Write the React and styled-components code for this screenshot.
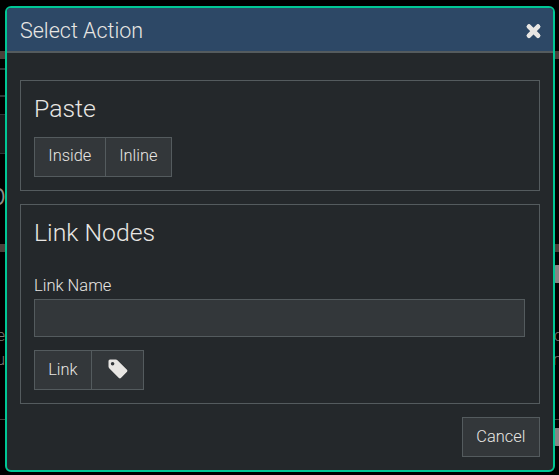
import React from "react";
import styled, { createGlobalStyle } from "styled-components";

const GlobalStyle = createGlobalStyle`
  * { box-sizing: border-box; }
  body {
    margin: 0;
    background: #000;
    color: #e8e6e3;
    font-family: Roboto, "Liberation Sans", sans-serif;
    font-weight: 300;
    font-size: 16px;
    overflow: hidden;
  }
`;

const Screen = styled.div`
  position: relative;
  width: 559px;
  height: 475px;
  overflow: hidden;
`;

const Page = styled.div`
  display: flex;
  flex-direction: column;
  height: 475px;
  padding-top: 51px;
`;

const Band = styled.div`
  height: 8px;
  background: #4a403a;
`;

const Gap = styled.div`
  height: ${(p) => p.$h}px;
`;

const Rule = styled.div`
  height: ${(p) => p.$h || 2}px;
  width: ${(p) => (p.$full ? "100%" : "50%")};
  background: ${(p) => p.$color || "#303436"};
`;

const Panel = styled.div`
  width: 50%;
  height: 40px;
  border: solid #303436;
  border-width: 1px 0;
  background: #171819;
`;

const Line = styled.div`
  display: flex;
  justify-content: space-between;
  height: 24px;
  line-height: 24px;
  font-size: ${(p) => p.$size || 16}px;
  color: ${(p) => p.$color || "#7c7770"};
`;

const Clip = styled.span`
  display: flex;
  justify-content: ${(p) => (p.$end ? "flex-end" : "flex-start")};
  width: ${(p) => p.$w}px;
`;

const Thumb = styled.div`
  align-self: flex-end;
  width: 8px;
  height: 18px;
  margin-right: -2px;
  border-radius: 3px;
  background: #858585;
`;

const Dialog = styled.section`
  position: absolute;
  left: 5px;
  top: 6px;
  width: 550px;
  height: 466px;
  border: 2px solid #00c795;
  border-radius: 6px;
  background: #24282b;
  overflow: hidden;
`;

const Header = styled.header`
  display: flex;
  align-items: center;
  justify-content: space-between;
  height: 45px;
  padding: 0 12px 0 13px;
  border-bottom: 2px solid #545b5e;
  background: #2d4866;
`;

const Title = styled.h1`
  margin: 2px 0 0;
  font-size: 21.5px;
  font-weight: 300;
  line-height: 26px;
`;

const CloseButton = styled.button`
  display: flex;
  margin: 3px -1px 0 0;
  padding: 0;
  border: 0;
  background: none;
  color: inherit;
`;

const Body = styled.div`
  display: flex;
  flex-direction: column;
  gap: 13px;
  padding: 27px 13px 13px;
`;

const Section = styled.section`
  height: ${(p) => p.$h}px;
  padding: 13px;
  border: 1px solid #545b5e;
`;

const Heading = styled.h2`
  margin: 0 0 ${(p) => p.$gap}px;
  font-size: 24.8px;
  font-weight: 300;
  line-height: 30px;
`;

const Label = styled.label`
  display: block;
  height: 26px;
  font-size: 16.5px;
  line-height: 26px;
`;

const Input = styled.input`
  display: block;
  width: 491px;
  height: 38px;
  margin-bottom: 13px;
  border: 1px solid #545b5e;
  background: #33373a;
  color: inherit;
  font: inherit;
  outline: none;
`;

const Group = styled.div`
  display: flex;
`;

const Button = styled.button`
  display: flex;
  align-items: center;
  justify-content: center;
  width: ${(p) => p.$w}px;
  height: 40px;
  padding: 0 ${(p) => (p.$icon ? 0 : 0.3)}px ${(p) => (p.$raised ? 3 : 1.6)}px 0;
  border: 1px solid #545b5e;
  background: #33373a;
  color: inherit;
  font: inherit;
  font-size: 16.4px;
  & + & { border-left: 0; }
`;

const Footer = styled.footer`
  display: flex;
  justify-content: flex-end;
`;

const CloseIcon = () => (
  <svg width="17" height="17" viewBox="0 0 17 17">
    <path d="M4 3.6L13 12.6M13 3.6L4 12.6" stroke="currentColor" strokeWidth="4.8" strokeLinecap="round" />
    <path d="M4 3.6L13 12.6M13 3.6L4 12.6" stroke="currentColor" strokeWidth="3.4" strokeLinecap="square" />
  </svg>
);

const TagIcon = () => (
  <svg width="20" height="20" viewBox="0 0 20 20">
    <path
      fill="currentColor"
      fillRule="evenodd"
      d="M.5 2Q.5.5 2 .5H7.6Q8.8.5 9.7 1.4L19 10.7Q19.9 11.7 19 12.7L12.9 19Q11.9 19.9 10.9 19L1.4 9.6Q.5 8.7.5 7.5ZM4.6 2.9a1.8 1.8 0 1 0 0 3.6a1.8 1.8 0 1 0 0-3.6Z"
    />
  </svg>
);

export default function App() {
  return (
    <>
      <GlobalStyle />
      <Screen>
        <Page aria-hidden="true">
          <Band />
          <Gap $h={9} />
          <Rule />
          <Gap $h={25} />
          <Rule />
          <Gap $h={17} />
          <Panel />
          <Gap $h={29} />
          <Line $size={31} $color="#918e89"><Clip $end $w={6}>p</Clip></Line>
          <Gap $h={37} />
          <Band />
          <Gap $h={13} />
          <Thumb />
          <Gap $h={41} />
          <Line><Clip $end $w={5}>e</Clip><Clip $w={5}>c</Clip></Line>
          <Line><Clip $end $w={5}>u</Clip><Clip $w={6}>n</Clip></Line>
          <Gap $h={47} />
          <Rule $full $h={1} $color="#45413c" />
          <Gap $h={8} />
          <Thumb />
        </Page>
        <Dialog>
          <Header>
            <Title>Select Action</Title>
            <CloseButton aria-label="Close"><CloseIcon /></CloseButton>
          </Header>
          <Body>
            <Section $h={111}>
              <Heading $gap={13}>Paste</Heading>
              <Group>
                <Button $w={72} $raised>Inside</Button>
                <Button $w={66} $raised>Inline</Button>
              </Group>
            </Section>
            <Section $h={200}>
              <Heading $gap={25}>Link Nodes</Heading>
              <Label htmlFor="link-name">Link Name</Label>
              <Input id="link-name" />
              <Group>
                <Button $w={58}>Link</Button>
                <Button $w={52} $icon aria-label="Tag"><TagIcon /></Button>
              </Group>
            </Section>
            <Footer>
              <Button $w={78}>Cancel</Button>
            </Footer>
          </Body>
        </Dialog>
      </Screen>
    </>
  );
}
